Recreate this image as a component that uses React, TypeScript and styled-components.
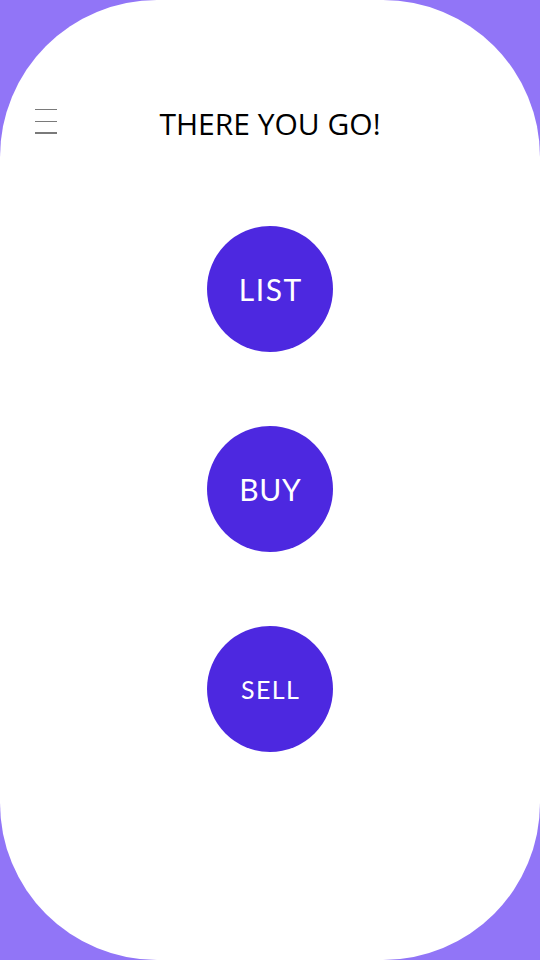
import React from "react";
import styled, { createGlobalStyle } from "styled-components";

const Global = createGlobalStyle`
  html, body { margin: 0; padding: 0; background: #9175f7; }
  #root { width: 540px; height: 960px; }
`;

const Card = styled.div`
  width: 540px;
  height: 960px;
  background: #ffffff;
  border-radius: 157px;
  box-sizing: border-box;
  display: flex;
  flex-direction: column;
  align-items: center;
`;

const Header = styled.header`
  margin-top: 95px;
  width: 100%;
  height: 56px;
  position: relative;
  display: flex;
  align-items: center;
  justify-content: center;
`;

const MenuButton = styled.div`
  position: absolute;
  left: 35px;
  top: 14px;
  width: 22px;
  display: flex;
  flex-direction: column;
  gap: 10.5px;
`;

const MenuLine = styled.span`
  display: block;
  height: 1.2px;
  background: #7a7a7a;
`;

const Title = styled.h1`
  margin: 0;
  font-family: "Open Sans", "Noto Sans", sans-serif;
  font-weight: 400;
  font-size: 30px;
  letter-spacing: 0px;
  color: #000;
`;

const Actions = styled.div`
  margin-top: 75px;
  display: flex;
  flex-direction: column;
  align-items: center;
  gap: 74px;
`;

const Circle = styled.button<{ $size: number; $spacing: number }>`
  width: 126px;
  height: 126px;
  border-radius: 50%;
  border: none;
  background: #4d28e0;
  color: #fff;
  font-family: "Lato", "Noto Sans", sans-serif;
  font-weight: 400;
  font-size: ${(p) => p.$size}px;
  letter-spacing: ${(p) => p.$spacing}px;
  text-indent: ${(p) => p.$spacing}px;
  display: flex;
  align-items: center;
  justify-content: center;
  padding: 0;
  cursor: pointer;
`;

export default function App() {
  return (
    <>
      <Global />
      <Card>
        <Header>
          <MenuButton>
            <MenuLine />
            <MenuLine />
            <MenuLine />
          </MenuButton>
          <Title>THERE YOU GO!</Title>
        </Header>
        <Actions>
          <Circle $size={30} $spacing={1.6}>LIST</Circle>
          <Circle $size={30} $spacing={0.6}>BUY</Circle>
          <Circle $size={25} $spacing={1.4}>SELL</Circle>
        </Actions>
      </Card>
    </>
  );
}
